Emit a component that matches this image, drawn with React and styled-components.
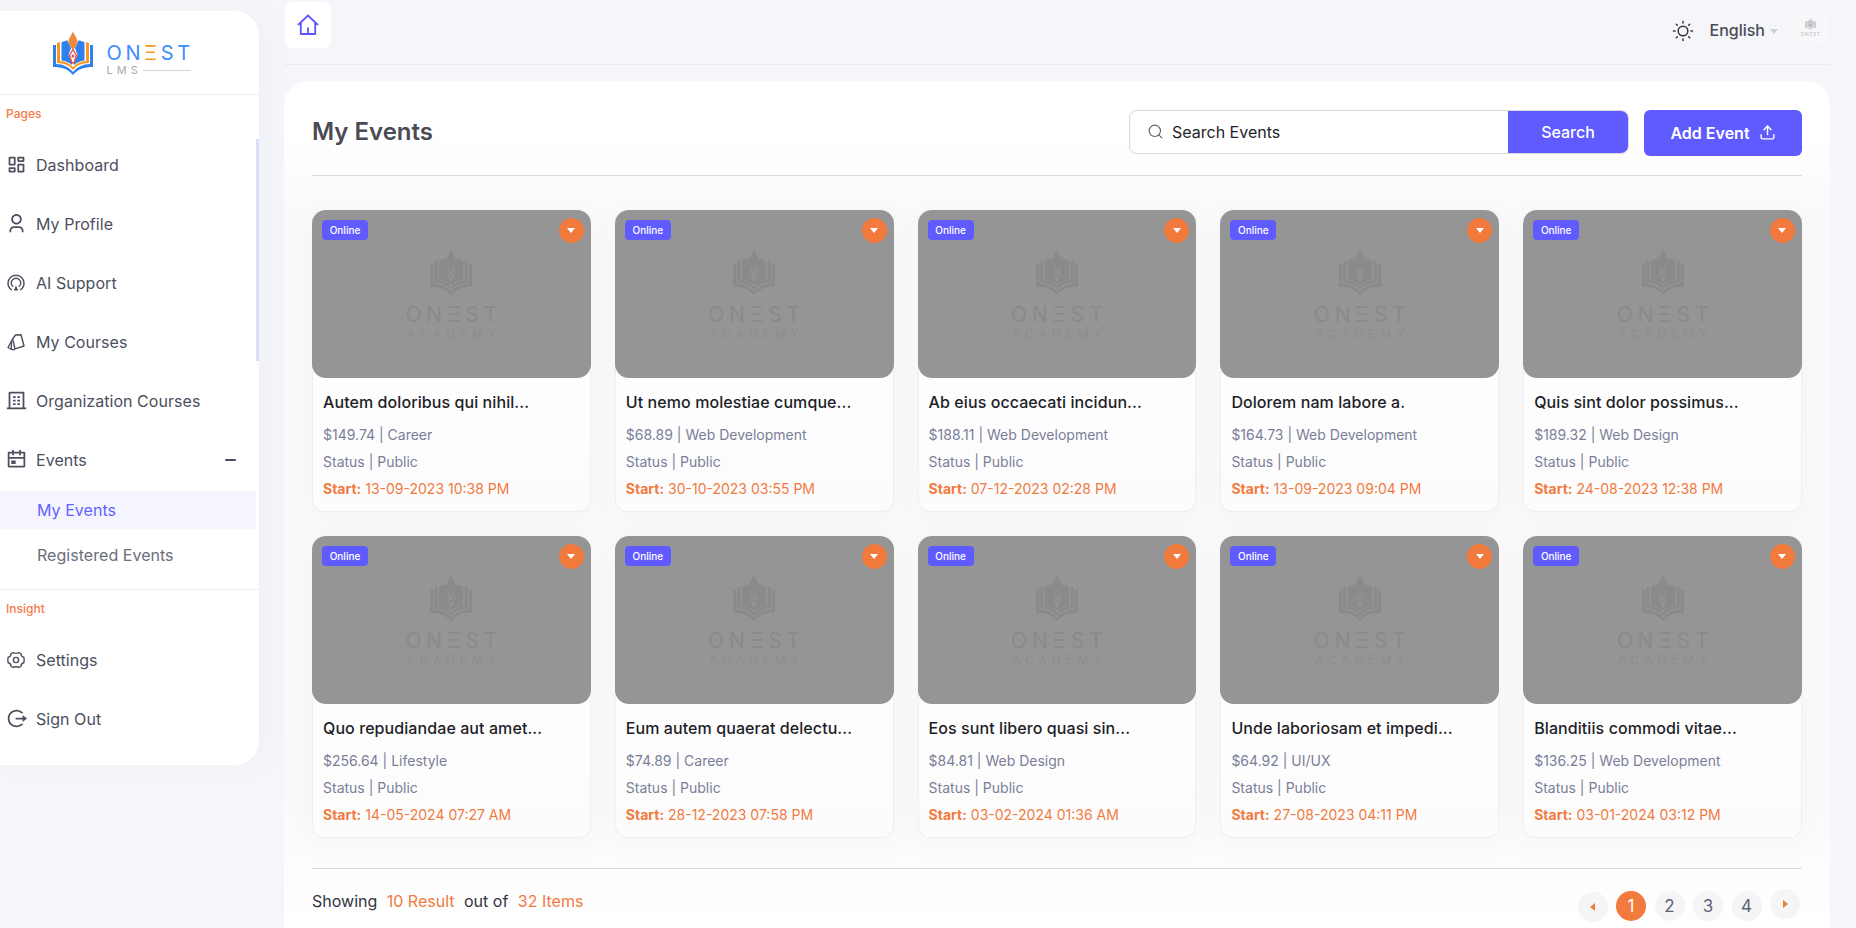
import React from "react";
import styled, { createGlobalStyle } from "styled-components";
import {
  RiDashboardLine,
  RiUser3Line,
  RiCalendarEventLine,
  RiLogoutCircleRLine,
  RiBuilding4Line,
} from "react-icons/ri";
import { Search as SearchIcon, Upload } from "lucide-react";

const GlobalStyle = createGlobalStyle`
  html, body { margin: 0; padding: 0; height: 928px; overflow: hidden; background: #f4f6fa; }
  body { font-family: Inter, "Noto Sans", "Liberation Sans", sans-serif; color: #4c4f5e; }
  * { box-sizing: border-box; }
`;

const Page = styled.div`
  display: flex;
  width: 1856px;
  height: 928px;
  overflow: hidden;
`;

const Sidebar = styled.aside`
  position: relative;
  flex: none;
  width: 259px;
  height: 754px;
  margin-top: 11px;
  background: #fff;
  border-radius: 0 24px 24px 0;
  box-shadow: 8px 0 24px rgba(120, 120, 170, 0.04);
`;

const ScrollThumb = styled.div`
  position: absolute;
  right: 0;
  top: 128px;
  width: 3px;
  height: 222px;
  background: #dcdcfb;
`;

const LogoArea = styled.div`
  height: 84px;
  padding: 0 16px 0 0;
  display: flex;
  align-items: center;
  justify-content: center;
  gap: 14px;
  border-bottom: 1px solid #eeeef1;
`;

const LogoWords = styled.div`
  display: flex;
  flex-direction: column;
  width: 84px;
  margin-top: 13px;
`;

const LogoName = styled.div`
  font-size: 20px;
  line-height: 22px;
  letter-spacing: 3.6px;
  font-weight: 400;
  color: #3f8cff;
  white-space: nowrap;
  em { font-style: normal; color: #f8981d; }
`;

const LogoSub = styled.div`
  display: flex;
  align-items: center;
  gap: 1px;
  font-size: 11px;
  line-height: 12px;
  letter-spacing: 4px;
  color: #a9a9ae;
  &::after {
    content: "";
    flex: 1;
    height: 1px;
    background: #d5d5d8;
  }
`;

const Category = styled.div`
  font-size: 12px;
  line-height: 14px;
  font-weight: 500;
  color: #f6794b;
  padding: 12px 0 14px 6px;
`;

const NavItem = styled.div`
  height: 59px;
  display: flex;
  align-items: center;
  padding: 0 20px 0 7px;
  gap: 11px;
  font-size: 16px;
  letter-spacing: 0.04px;
  color: #4c4f5e;
  span { flex: 1; }
`;

const NavIcon = styled.div`
  flex: none;
  width: 18px;
  height: 18px;
  display: flex;
  align-items: center;
  justify-content: center;
  svg {
    flex: none;
    width: ${(p) => (p.$wide ? 21 : 18)}px;
    height: ${(p) => (p.$wide ? 21 : 18)}px;
    display: block;
  }
`;

const Minus = styled.i`
  width: 11px;
  height: 2px;
  background: #4c4f5e;
  border-radius: 1px;
  margin-right: 3px;
`;

const SubList = styled.div`
  display: flex;
  flex-direction: column;
  gap: 7px;
  margin-top: 2px;
  padding-bottom: 15px;
  border-bottom: 1px solid #eeeef1;
`;

const SubItem = styled.div`
  height: 38px;
  width: 256px;
  display: flex;
  align-items: center;
  padding-left: 37px;
  font-size: 16px;
  letter-spacing: 0.04px;
  border-radius: 4px 0 0 4px;
  background: ${(p) => (p.$active ? "#f5f5ff" : "transparent")};
  color: ${(p) => (p.$active ? "#6461ff" : "#6b6e7b")};
`;

const Main = styled.main`
  flex: none;
  width: 1546px;
  margin-left: 25px;
  display: flex;
  flex-direction: column;
`;

const TopBar = styled.header`
  height: 66px;
  display: flex;
  align-items: flex-start;
  justify-content: space-between;
  border-bottom: 1px solid #e9ebf0;
  padding-left: 1px;
`;

const HomeButton = styled.div`
  width: 46px;
  height: 46px;
  margin-top: 2px;
  background: #fff;
  border-radius: 8px;
  display: flex;
  align-items: center;
  justify-content: center;
`;

const TopRight = styled.div`
  display: flex;
  align-items: flex-start;
  height: 39px;
  margin-top: 8px;
  color: #4b4b55;
`;

const SunMark = styled.svg`
  margin-top: 12px;
`;

const Language = styled.div`
  margin: 12px 0 0 16px;
  font-size: 16px;
  font-weight: 500;
  line-height: 20px;
`;

const Caret = styled.i`
  margin: 21px 13px 0 5px;
  border-left: 4px solid transparent;
  border-right: 4px solid transparent;
  border-top: 5px solid #cfcfd3;
`;

const Avatar = styled.div`
  width: 39px;
  height: 39px;
  border-radius: 50%;
  background: #f7f8fa;
  display: flex;
  flex-direction: column;
  align-items: center;
  justify-content: center;
  gap: 1px;
  color: #b9b9bd;
  font-size: 5px;
  line-height: 6px;
  letter-spacing: 0.5px;
`;

const Panel = styled.section`
  margin-top: 16px;
  height: 860px;
  padding: 29px 28px 0;
  border-radius: 24px 24px 0 0;
  background: linear-gradient(#fff 0, #fff 50px, #fafafb 130px, #fafafb 720px, #fff 847px);
`;

const PanelHead = styled.div`
  display: flex;
  align-items: flex-start;
  height: 66px;
  border-bottom: 1px solid #d9d9dc;
`;

const Title = styled.h1`
  flex: 1;
  margin: 0;
  font-size: 24px;
  line-height: 44px;
  font-weight: 600;
  color: #4a4b55;
`;

const SearchBox = styled.div`
  width: 500px;
  height: 44px;
  display: flex;
  align-items: stretch;
  border: 1px solid #d8d8dc;
  border-radius: 8px;
  background: #fff;
  overflow: hidden;
`;

const SearchField = styled.div`
  flex: 1;
  display: flex;
  align-items: center;
  gap: 8px;
  padding-left: 17px;
  font-size: 16px;
  color: #222329;
  svg { color: #5d6170; }
`;

const SearchButton = styled.div`
  width: 120px;
  display: flex;
  align-items: center;
  justify-content: center;
  background: #5f5bff;
  color: #fff;
  font-size: 16px;
  font-weight: 500;
`;

const AddButton = styled.div`
  width: 158px;
  height: 46px;
  margin-left: 15px;
  display: flex;
  align-items: center;
  justify-content: center;
  gap: 9px;
  border-radius: 6px;
  background: #5f5bff;
  color: #fff;
  font-size: 16px;
  font-weight: 600;
`;

const Grid = styled.div`
  display: grid;
  grid-template-columns: repeat(5, 1fr);
  gap: 24px;
  margin-top: 34px;
`;

const Card = styled.article`
  height: 302px;
  display: flex;
  flex-direction: column;
  border: 1px solid #efeff2;
  border-top: 0;
  border-radius: 12px;
  background: linear-gradient(#fff, #fcfcfd);
  box-shadow: 0 6px 30px rgba(90, 90, 120, 0.04);
`;

const Thumb = styled.div`
  position: relative;
  flex: none;
  height: 168px;
  margin: 0 -1px;
  border-radius: 14px;
  background: #959595;
  display: flex;
  flex-direction: column;
  align-items: center;
  padding-top: 39px;
  color: #8a8a8a;
`;

const MarkName = styled.div`
  margin-top: 8px;
  font-size: 21px;
  line-height: 24px;
  letter-spacing: 4.8px;
  padding-left: 4.8px;
  font-weight: 400;
`;

const MarkSub = styled.div`
  font-size: 12px;
  line-height: 14px;
  letter-spacing: 5px;
  padding-left: 5px;
  color: #8d8d8d;
`;

const Badge = styled.div`
  position: absolute;
  left: 10px;
  top: 10px;
  width: 46px;
  height: 20px;
  display: flex;
  align-items: center;
  justify-content: center;
  border-radius: 4px;
  background: #5f5bff;
  color: #fff;
  font-size: 10px;
  font-weight: 500;
`;

const Menu = styled.div`
  position: absolute;
  right: 7px;
  top: 8px;
  width: 25px;
  height: 25px;
  display: flex;
  align-items: center;
  justify-content: center;
  border-radius: 50%;
  background: #f27a3d;
  &::after {
    content: "";
    border-left: 4.5px solid transparent;
    border-right: 4.5px solid transparent;
    border-top: 5px solid #fff;
  }
`;

const CardBody = styled.div`
  padding: 12px 10px 0;
  display: flex;
  flex-direction: column;
`;

const CardTitle = styled.h3`
  margin: 0 0 7px;
  font-size: 16px;
  line-height: 24px;
  font-weight: 550;
  letter-spacing: 0.08px;
  color: #1d1e27;
  white-space: nowrap;
`;

const Meta = styled.div`
  font-size: 14px;
  line-height: 27px;
  color: #7a7f98;
`;

const Start = styled.div`
  font-size: 14px;
  line-height: 27px;
  color: #f27a3d;
  b { font-weight: 700; }
`;

const Footer = styled.div`
  display: flex;
  justify-content: space-between;
  align-items: flex-start;
  margin-top: 30px;
  padding: 20px 2px 0 0;
  border-top: 1px solid #dcdcdf;
`;

const Showing = styled.div`
  display: flex;
  gap: 9.5px;
  height: 24px;
  align-items: center;
  font-size: 16px;
  color: #33343e;
  em { font-style: normal; color: #f27a3d; }
`;

const Pager = styled.div`
  display: flex;
  gap: 8.5px;
  align-items: flex-start;
`;

const PageDot = styled.div`
  width: 30px;
  height: 30px;
  margin-top: ${(p) => p.$shift || 0}px;
  display: flex;
  align-items: center;
  justify-content: center;
  border-radius: 50%;
  font-size: 17px;
  background: ${(p) => (p.$active ? "#f27a3d" : "#f5f5f6")};
  color: ${(p) => (p.$active ? "#fff" : "#5d6378")};
`;

const Arrow = styled.i`
  border-top: 4.5px solid transparent;
  border-bottom: 4.5px solid transparent;
  ${(p) => (p.$left ? "border-right: 5px solid #f27a3d;" : "border-left: 5px solid #f27a3d;")}
`;

const BookLogo = ({ w = 40, h = 44, mono }) => {
  const blue = mono || "#2f80ed";
  const orange = mono || "#f8981d";
  const flame = mono || "#ef8a3c";
  const nib = mono || "#e2504a";
  const hole = mono ? "#959595" : "#fff";
  return (
    <svg width={w} height={h} viewBox="0 0 40 44" aria-hidden="true">
      <path d="M20 0C21 4 24.5 7 24.5 11C24.5 14.5 22 16 20.7 18.5H19.3C18 16 15.5 14.5 15.5 11C15.5 7 19 4 20 0Z" fill={flame} />
      <path d="M0 14H3V33C10 33 16 36 20 41C24 36 30 33 37 33V14H40V36C31 36 25 38 20 44C15 38 9 36 0 36Z" fill={blue} />
      <path d="M4 12L7 11V30C12 30 16 32 20 36C24 32 28 30 33 30V11L36 12V32C29 32 24 34 20 39C16 34 11 32 4 32Z" fill={orange} />
      <path d="M8.5 11.5C10 10.5 12 9.8 14.5 9.2C15.5 12.5 16.5 14.5 18 17L15.5 24L19 32V34C16 31.5 13 30 8.5 29.5Z" fill={blue} />
      <path d="M31.5 11.5C30 10.5 28 9.8 25.5 9.2C24.5 12.5 23.5 14.5 22 17L24.5 24L21 32V34C24 31.5 27 30 31.5 29.5Z" fill={blue} />
      <path d="M20 18.5L23.5 24.5L21 32H19L16.5 24.5Z" fill={hole} stroke={nib} strokeWidth="1.4" strokeLinejoin="round" />
      <circle cx="20" cy="25" r="1.5" fill={nib} />
    </svg>
  );
};

const HomeGlyph = () => (
  <svg width="22" height="22" viewBox="0 0 22 22" fill="none" stroke="#5f55ff" strokeWidth="1.8" aria-hidden="true">
    <path d="M1 11L11 1.5L21 11" />
    <path d="M3.8 9V20H18.2V9" />
    <path d="M11 20V13.5" />
  </svg>
);

const SunGlyph = () => (
  <SunMark width="22" height="22" viewBox="0 0 22 22" fill="none" stroke="#33343c" strokeWidth="1.5" strokeLinecap="round" aria-hidden="true">
    <circle cx="11" cy="11" r="4.8" />
    <path d="M11 1.5V3M11 19V20.5M1.5 11H3M19 11H20.5M4.3 4.3L5.3 5.3M16.7 16.7L17.7 17.7M4.3 17.7L5.3 16.7M16.7 5.3L17.7 4.3" />
  </SunMark>
);

const SupportGlyph = () => (
  <svg viewBox="0 0 18 18" fill="none" stroke="#4c4f5e" strokeWidth="1.4" aria-hidden="true">
    <path d="M5 16C2.5 14.6 1 12 1 9.2C1 4.8 4.6 1.2 9 1.2S17 4.8 17 9.2C17 12 15.5 14.6 13 16" />
    <path d="M6.2 12.8C5 11.8 4.2 10.5 4.2 9C4.2 6.4 6.4 4.3 9 4.3S13.8 6.4 13.8 9C13.8 10.5 13 11.8 11.8 12.8" />
    <path d="M9 11.5L11.2 16.5H6.8Z" fill="#4c4f5e" stroke="none" />
  </svg>
);

const CoursesGlyph = () => (
  <svg viewBox="0 0 18 18" fill="none" stroke="#4c4f5e" strokeWidth="1.4" strokeLinejoin="round" aria-hidden="true">
    <path d="M8.5 2L14 1.8L17 13L8 15.8L5.6 6Z" />
    <path d="M5.6 6L1 14.5L5 16.6H8" />
    <path d="M4.4 8.4L4.4 16.2" />
  </svg>
);

const SettingsGlyph = () => (
  <svg viewBox="0 0 18 18" fill="none" stroke="#4c4f5e" strokeWidth="1.4" strokeLinejoin="round" aria-hidden="true">
    <path d="M6 1.5C7 2.6 11 2.6 12 1.5L14.2 3C13.9 4.6 15.2 5.8 16.8 6.2L17.2 9L16.8 11.8C15.2 12.2 13.9 13.4 14.2 15L12 16.5C11 15.4 7 15.4 6 16.5L3.8 15C4.1 13.4 2.8 12.2 1.2 11.8L0.8 9L1.2 6.2C2.8 5.8 4.1 4.6 3.8 3Z" />
    <circle cx="9" cy="9" r="2.6" />
  </svg>
);

const navTop = [
  ["Dashboard", <RiDashboardLine key="a" color="#4c4f5e" />, true],
  ["My Profile", <RiUser3Line key="b" color="#4c4f5e" />, true],
  ["AI Support", <SupportGlyph key="c" />, false],
  ["My Courses", <CoursesGlyph key="d" />, false],
  ["Organization Courses", <RiBuilding4Line key="e" color="#4c4f5e" />, true],
];

const events = [
  ["Autem doloribus qui nihil...", "$149.74", "Career", "13-09-2023 10:38 PM"],
  ["Ut nemo molestiae cumque...", "$68.89", "Web Development", "30-10-2023 03:55 PM"],
  ["Ab eius occaecati incidun...", "$188.11", "Web Development", "07-12-2023 02:28 PM"],
  ["Dolorem nam labore a.", "$164.73", "Web Development", "13-09-2023 09:04 PM"],
  ["Quis sint dolor possimus...", "$189.32", "Web Design", "24-08-2023 12:38 PM"],
  ["Quo repudiandae aut amet...", "$256.64", "Lifestyle", "14-05-2024 07:27 AM"],
  ["Eum autem quaerat delectu...", "$74.89", "Career", "28-12-2023 07:58 PM"],
  ["Eos sunt libero quasi sin...", "$84.81", "Web Design", "03-02-2024 01:36 AM"],
  ["Unde laboriosam et impedi...", "$64.92", "UI/UX", "27-08-2023 04:11 PM"],
  ["Blanditiis commodi vitae...", "$136.25", "Web Development", "03-01-2024 03:12 PM"],
];

const EventCard = ({ title, price, category, start }) => (
  <Card>
    <Thumb>
      <BookLogo w={42} h={46} mono="#8a8a8a" />
      <MarkName>ONΞST</MarkName>
      <MarkSub>ACADEMY</MarkSub>
      <Badge>Online</Badge>
      <Menu />
    </Thumb>
    <CardBody>
      <CardTitle>{title}</CardTitle>
      <Meta>{price} | {category}</Meta>
      <Meta>Status | Public</Meta>
      <Start><b>Start:</b> {start}</Start>
    </CardBody>
  </Card>
);

export default function App() {
  return (
    <Page>
      <GlobalStyle />
      <Sidebar>
        <ScrollThumb />
        <LogoArea>
          <BookLogo />
          <LogoWords>
            <LogoName>ON<em>Ξ</em>ST</LogoName>
            <LogoSub>LMS</LogoSub>
          </LogoWords>
        </LogoArea>
        <Category>Pages</Category>
        {navTop.map(([label, icon, wide]) => (
          <NavItem key={label}>
            <NavIcon $wide={wide}>{icon}</NavIcon>
            <span>{label}</span>
          </NavItem>
        ))}
        <NavItem>
          <NavIcon $wide><RiCalendarEventLine color="#4c4f5e" /></NavIcon>
          <span>Events</span>
          <Minus />
        </NavItem>
        <SubList>
          <SubItem $active>My Events</SubItem>
          <SubItem>Registered Events</SubItem>
        </SubList>
        <Category>Insight</Category>
        <NavItem>
          <NavIcon><SettingsGlyph /></NavIcon>
          <span>Settings</span>
        </NavItem>
        <NavItem>
          <NavIcon $wide><RiLogoutCircleRLine color="#4c4f5e" /></NavIcon>
          <span>Sign Out</span>
        </NavItem>
      </Sidebar>
      <Main>
        <TopBar>
          <HomeButton><HomeGlyph /></HomeButton>
          <TopRight>
            <SunGlyph />
            <Language>English</Language>
            <Caret />
            <Avatar>
              <BookLogo w={11} h={12} mono="#c4c4c8" />
              <div>ONΞST</div>
            </Avatar>
          </TopRight>
        </TopBar>
        <Panel>
          <PanelHead>
            <Title>My Events</Title>
            <SearchBox>
              <SearchField>
                <SearchIcon size={17} strokeWidth={1.6} />
                Search Events
              </SearchField>
              <SearchButton>Search</SearchButton>
            </SearchBox>
            <AddButton>
              Add Event
              <Upload size={17} strokeWidth={2} />
            </AddButton>
          </PanelHead>
          <Grid>
            {events.map(([title, price, category, start]) => (
              <EventCard key={title} title={title} price={price} category={category} start={start} />
            ))}
          </Grid>
          <Footer>
            <Showing>
              Showing <em>10 Result</em> out of <em>32 Items</em>
            </Showing>
            <Pager>
              <PageDot $shift={3}><Arrow $left /></PageDot>
              <PageDot $shift={2} $active>1</PageDot>
              <PageDot $shift={2}>2</PageDot>
              <PageDot $shift={2}>3</PageDot>
              <PageDot $shift={2}>4</PageDot>
              <PageDot><Arrow /></PageDot>
            </Pager>
          </Footer>
        </Panel>
      </Main>
    </Page>
  );
}
